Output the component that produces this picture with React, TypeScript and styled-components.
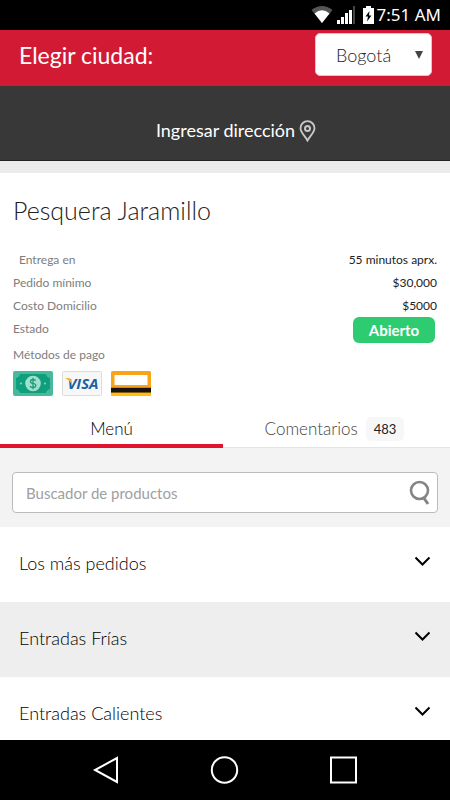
import React from "react";
import styled, { createGlobalStyle } from "styled-components";

const GlobalStyle = createGlobalStyle`
  * { box-sizing: border-box; }
  body { margin: 0; background: #fff; font-family: Lato, "Liberation Sans", sans-serif; color: #111; }
  button, input, select { font-family: inherit; }
`;

const Screen = styled.div`
  display: flex;
  flex-direction: column;
  height: 100vh;
`;

const StatusBar = styled.div`
  flex: none;
  display: flex;
  align-items: center;
  justify-content: flex-end;
  height: 30px;
  padding: 0 9px;
  background: #000;
  color: #fff;
  font: 17px/30px "Noto Sans", sans-serif;
`;

const StatusIcons = styled.svg`
  width: 64px;
  height: 20px;
  margin-right: 2px;
`;

const Page = styled.main`
  flex: 1;
  min-height: 0;
  overflow: hidden;
`;

const CityBar = styled.header`
  display: flex;
  align-items: flex-start;
  justify-content: space-between;
  height: 56px;
  padding: 3px 18px 0 19px;
  background: #d31a34;
  color: #fff;
  font-size: 23px;
  line-height: 44px;
`;

const SelectWrap = styled.div`
  position: relative;
  width: 117px;
`;

const CitySelect = styled.select`
  appearance: none;
  display: block;
  width: 100%;
  height: 43px;
  padding: 0 30px 0 20px;
  border: 1px solid #d8c8ca;
  border-radius: 5px;
  background: #fff;
  color: #222;
  font-size: 18px;
  font-weight: 300;
`;

const SelectArrow = styled.svg`
  position: absolute;
  right: 9px;
  top: 18px;
  width: 8px;
  height: 8px;
  pointer-events: none;
`;

const AddressButton = styled.button`
  display: flex;
  align-items: center;
  justify-content: center;
  gap: 4px;
  width: 100%;
  height: 75px;
  padding: 13px 0 0 22px;
  border: 0;
  border-bottom: 1px solid #222;
  background: #383838;
  color: #fff;
  font-size: 18px;
`;

const PinIcon = styled.svg`
  width: 17px;
  height: 22px;
  margin-top: 3px;
`;

const Restaurant = styled.section`
  padding: 21px 13px 13px;
  border-top: 12px solid #ebebeb;
`;

const Name = styled.h1`
  margin: 0 0 22px;
  color: #222;
  font-size: 25px;
  font-weight: 300;
  line-height: 32px;
`;

const Details = styled.dl`
  margin: 0;
  font-size: 12px;
  line-height: 23px;
`;

const Detail = styled.div<{ $inset?: boolean }>`
  display: flex;
  justify-content: space-between;
  padding-left: ${(p) => (p.$inset ? 6 : 0)}px;

  dt { color: #7d7d7d; }
  dd { margin: 0; color: #222; }
`;

const OpenBadge = styled.span`
  display: block;
  margin-right: 2px;
  width: 82px;
  border-radius: 6px;
  background: #2ecc71;
  color: #fff;
  font-size: 15px;
  font-weight: 700;
  line-height: 26px;
  text-align: center;
`;

const Payments = styled.div`
  display: flex;
  gap: 9px;
  margin-top: 5px;

  svg { width: 40px; height: 25px; }
`;

const Tabs = styled.div`
  display: flex;
  border-bottom: 1px solid #e4e4e4;
`;

const Tab = styled.button<{ $active?: boolean }>`
  flex: 1;
  display: flex;
  align-items: center;
  justify-content: center;
  gap: 8px;
  height: 39px;
  margin-bottom: -1px;
  padding: ${(p) => (p.$active ? "3px 0 0" : "0 4px 0 0")};
  border: 0;
  border-bottom: ${(p) => (p.$active ? "4px solid #e0142f" : "0")};
  background: none;
  color: ${(p) => (p.$active ? "#000" : "#444")};
  font-size: 17px;
  font-weight: 300;
`;

const Count = styled.span`
  padding: 0 8px;
  border-radius: 5px;
  background: #f7f7f7;
  color: #222;
  font-size: 13px;
  font-weight: 400;
  line-height: 24px;
`;

const SearchArea = styled.form`
  padding: 24px 12px 14px;
  background: #f3f3f3;
`;

const SearchBox = styled.div`
  display: flex;
  align-items: center;
  height: 41px;
  padding: 0 6px 0 13px;
  border: 1px solid #bbb;
  border-radius: 4px;
  background: #fff;
`;

const SearchInput = styled.input`
  flex: 1;
  min-width: 0;
  padding: 0;
  border: 0;
  outline: 0;
  background: none;
  font-size: 15px;

  &::placeholder { color: #a0a0a0; opacity: 1; }
`;

const SearchButton = styled.button`
  padding: 0;
  border: 0;
  background: none;

  svg { display: block; width: 22px; height: 26px; }
`;

const Category = styled.button<{ $shaded: boolean }>`
  display: flex;
  align-items: center;
  justify-content: space-between;
  width: 100%;
  height: 75px;
  padding: 0 19px 4px;
  border: 0;
  background: ${(p) => (p.$shaded ? "#eee" : "#fff")};
  color: #000;
  font-size: 18px;
  font-weight: 300;

  svg { width: 17px; height: 12px; margin-bottom: 3px; }
`;

const NavBar = styled.nav`
  flex: none;
  display: flex;
  align-items: center;
  justify-content: center;
  gap: 88px;
  height: 60px;
  padding-right: 2px;
  background: #000;
`;

const NavButton = styled.button`
  padding: 0;
  border: 0;
  background: none;

  svg { display: block; width: 31px; height: 30px; }
`;

const Cash = () => (
  <svg viewBox="0 0 40 25" role="img" aria-label="Efectivo">
    <rect width="40" height="25" rx="2" fill="#48b99b" />
    <path d="M7 3H33Q33.500 6 37 7V18Q33.500 19 33 22H7Q6.500 19 3 18V7Q6.500 6 7 3Z" fill="#0f9f7c" />
    <circle cx="20" cy="12.500" r="7.800" fill="#a4dfce" />
    <path d="M22.700 9.800Q22.300 8.500 20 8.500Q17.500 8.500 17.500 10.500Q17.500 12 20 12.400Q22.800 12.900 22.800 14.600Q22.800 16.600 20 16.600Q17.500 16.600 17.100 15M20 6.800V18.200" fill="none" stroke="#169e7d" strokeWidth="1.300" />
    <circle cx="8" cy="12.500" r="1" fill="#8fd8c3" />
    <circle cx="32" cy="12.500" r="1" fill="#8fd8c3" />
  </svg>
);

const Visa = () => (
  <svg viewBox="0 0 40 25" role="img" aria-label="Visa">
    <rect x="0.500" y="0.500" width="39" height="24" rx="1" fill="#f7f7f7" stroke="#dcdcdc" />
    <text x="21" y="18" textAnchor="middle" fontFamily="Open Sans, sans-serif" fontSize="15" fontWeight="700" fontStyle="italic" fill="#1d5fa6">VISA</text>
    <path d="M3 7H7Q8.500 7.300 9 9L9.500 12.500Q7.500 9 3 7Z" fill="#edb33c" />
  </svg>
);

const Card = () => (
  <svg viewBox="0 0 40 25" role="img" aria-label="Tarjeta">
    <rect width="40" height="25" rx="1.500" fill="#f9a31a" />
    <rect x="3.500" y="4" width="33" height="10" fill="#fff" />
    <rect y="16" width="40" height="1" fill="#c98616" />
    <rect y="17" width="40" height="4.500" fill="#17130c" />
    <path d="M0 22H40V23.500Q40 25 38.500 25H1.500Q0 25 0 23.500Z" fill="#ffc107" />
  </svg>
);

const Chevron = () => (
  <svg viewBox="0 0 17 12" fill="none" stroke="#000" strokeWidth="2" aria-hidden="true">
    <path d="M1.500 2.500L8.500 9.500L15.500 2.500" />
  </svg>
);

const categories = ["Los más pedidos", "Entradas Frías", "Entradas Calientes"];

export default function App() {
  return (
    <Screen>
      <GlobalStyle />
      <StatusBar>
        <StatusIcons viewBox="0 0 64 20" aria-hidden="true">
          <path d="M0.500 5Q11 -3 21.500 5L11 18Z" fill="#555" />
          <path d="M3.500 8.500Q11 2 18.500 8.500L11 18Z" fill="#fff" />
          <path d="M26 15H29V19H26ZM30 12H33V19H30ZM34 8H37V19H34ZM38 5H41V19H38Z" fill="#fff" />
          <path d="M42 1H44V19H42Z" fill="#444" />
          <path d="M55 1H60V3H63V19H52V3H55Z" fill="#fff" />
          <path d="M58.500 6L54.500 11.500H57L56 16.500L60.500 10.500H58Z" fill="#000" />
        </StatusIcons>
        <span>7:51 AM</span>
      </StatusBar>

      <Page>
        <CityBar>
          <label htmlFor="city">Elegir ciudad:</label>
          <SelectWrap>
            <CitySelect id="city" defaultValue="Bogotá">
              <option>Bogotá</option>
            </CitySelect>
            <SelectArrow viewBox="0 0 8 8" aria-hidden="true">
              <path d="M0 0H8L4 8Z" fill="#444" />
            </SelectArrow>
          </SelectWrap>
        </CityBar>

        <AddressButton type="button">
          Ingresar dirección
          <PinIcon viewBox="0 0 17 22" fill="none" stroke="#c8c8c8" aria-hidden="true">
            <path d="M8.500 20.500C6.500 16.500 1.500 12.500 1.500 8.200A7 7 0 0 1 15.500 8.200C15.500 12.500 10.500 16.500 8.500 20.500Z" strokeWidth="1.800" />
            <circle cx="8.500" cy="8.500" r="2.500" strokeWidth="2" />
          </PinIcon>
        </AddressButton>

        <Restaurant>
          <Name>Pesquera Jaramillo</Name>
          <Details>
            <Detail $inset><dt>Entrega en</dt><dd>55 minutos aprx.</dd></Detail>
            <Detail><dt>Pedido mínimo</dt><dd>$30,000</dd></Detail>
            <Detail><dt>Costo Domicilio</dt><dd>$5000</dd></Detail>
            <Detail><dt>Estado</dt><dd><OpenBadge>Abierto</OpenBadge></dd></Detail>
            <Detail><dt>Métodos de pago</dt></Detail>
          </Details>
          <Payments><Cash /><Visa /><Card /></Payments>
        </Restaurant>

        <Tabs role="tablist">
          <Tab type="button" role="tab" aria-selected="true" $active>Menú</Tab>
          <Tab type="button" role="tab" aria-selected="false">Comentarios <Count>483</Count></Tab>
        </Tabs>

        <SearchArea role="search">
          <SearchBox>
            <SearchInput type="text" aria-label="Buscador de productos" placeholder="Buscador de productos" />
            <SearchButton type="button" aria-label="Buscar">
              <svg viewBox="0 0 22 26" fill="none" stroke="#858585">
                <circle cx="10.500" cy="10.500" r="8.500" strokeWidth="2.600" />
                <path d="M14.500 17.500L19 24" strokeWidth="3" />
              </svg>
            </SearchButton>
          </SearchBox>
        </SearchArea>

        {categories.map((name, i) => (
          <Category key={name} type="button" aria-expanded="false" $shaded={i % 2 === 1}>
            {name}
            <Chevron />
          </Category>
        ))}
      </Page>

      <NavBar>
        <NavButton type="button" aria-label="Atrás">
          <svg viewBox="0 0 31 30" fill="none" stroke="#fff" strokeWidth="2"><path d="M27 3V27L5 15Z" /></svg>
        </NavButton>
        <NavButton type="button" aria-label="Inicio">
          <svg viewBox="0 0 31 30" fill="none" stroke="#fff" strokeWidth="2"><circle cx="15.500" cy="15" r="12.700" /></svg>
        </NavButton>
        <NavButton type="button" aria-label="Recientes">
          <svg viewBox="0 0 31 30" fill="none" stroke="#fff" strokeWidth="2"><rect x="3" y="2.500" width="25" height="25" /></svg>
        </NavButton>
      </NavBar>
    </Screen>
  );
}
